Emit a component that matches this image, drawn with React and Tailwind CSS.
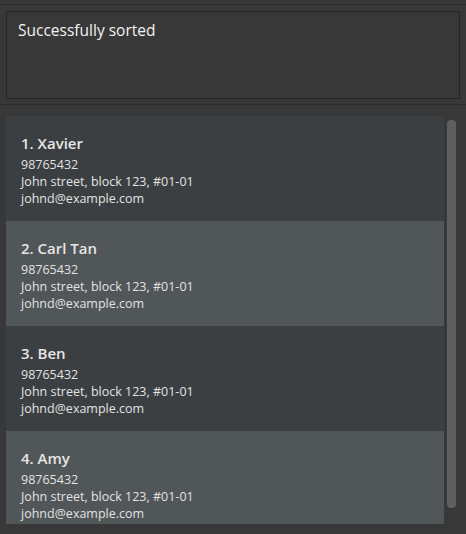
const persons = [
  { name: 'Xavier', phone: '98765432', address: 'John street, block 123, #01-01', email: 'johnd@example.com' },
  { name: 'Carl Tan', phone: '98765432', address: 'John street, block 123, #01-01', email: 'johnd@example.com' },
  { name: 'Ben', phone: '98765432', address: 'John street, block 123, #01-01', email: 'johnd@example.com' },
  { name: 'Amy', phone: '98765432', address: 'John street, block 123, #01-01', email: 'johnd@example.com' },
]

function PersonCard({ index, person }) {
  const even = index % 2 === 1
  return (
    <div className={`h-[105px] shrink-0 pl-[15px] pt-[17px] ${even ? 'bg-[#515658]' : 'bg-[#3c3f41]'}`}>
      <p className="text-[15px] font-semibold leading-[20px] text-[#e6e6e6]">
        {index + 1}. {person.name}
      </p>
      <p className="mt-[3px] text-[12.5px] leading-[17px] text-[#e2e2e2]">{person.phone}</p>
      <p className="text-[12.5px] leading-[17px] text-[#e2e2e2]">{person.address}</p>
      <p className="text-[12.5px] leading-[17px] text-[#e2e2e2]">{person.email}</p>
    </div>
  )
}

export default function App() {
  return (
    <div
      className="flex h-[534px] w-[466px] flex-col bg-[#383838]"
      style={{ fontFamily: '"Open Sans", "Noto Sans", sans-serif' }}
    >
      {/* Result display */}
      <div className="mt-[4px] border-t border-[#2a2a2a] px-[6px] pt-[6px] pb-[5px]">
        <div className="h-[88px] border border-[#262626] bg-[#383838] px-[11px] py-[7px]">
          <p className="text-[15.5px] leading-[22px] text-[#f2f2f2]">Successfully sorted</p>
        </div>
      </div>

      {/* Person list */}
      <div className="flex min-h-0 flex-1 border-t border-[#2a2a2a] pt-[11px] pb-[10px] pl-[6px]">
        <div className="flex w-[438px] flex-col overflow-hidden">
          {persons.map((p, i) => (
            <PersonCard key={i} index={i} person={p} />
          ))}
        </div>
        <div className="ml-[3px] pt-[4px]">
          <div className="h-[388px] w-[9px] rounded-[4px] bg-[#5f5f5f]" />
        </div>
      </div>
    </div>
  )
}
